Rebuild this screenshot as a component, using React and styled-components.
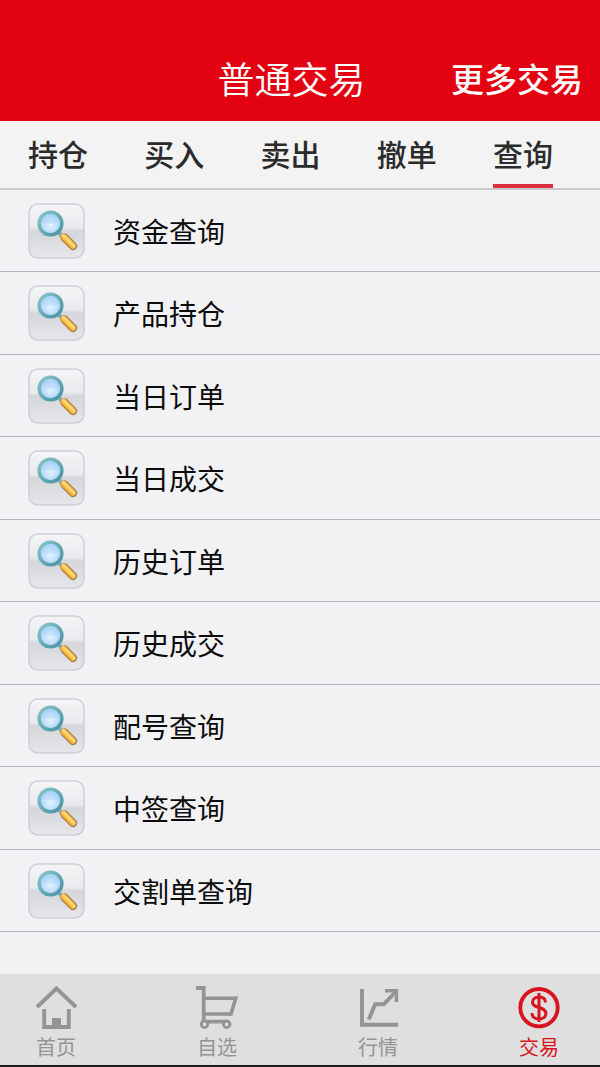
import { useState } from "react";
import styled, { createGlobalStyle } from "styled-components";

const GlobalStyle = createGlobalStyle`
  * {
    box-sizing: border-box;
  }

  body {
    margin: 0;
    background: #f2f2f5;
    font-family: "Noto Sans CJK SC", "Noto Sans", sans-serif;
  }

  button {
    margin: 0;
    padding: 0;
    border: 0;
    background: none;
    font: inherit;
    color: inherit;
    cursor: pointer;
  }
`;

const Page = styled.div`
  min-height: 100vh;
  display: flex;
  flex-direction: column;
`;

const Header = styled.header`
  display: grid;
  grid-template-columns: 1fr auto 1fr;
  align-items: center;
  height: 121px;
  padding: 34px 17px 0 0;
  background: #e30211;
  color: #fff;

  h1 {
    grid-column: 2;
    margin: 0;
    font-size: 37px;
    line-height: 40px;
    font-weight: 350;
  }
`;

const MoreButton = styled.button`
  && {
    justify-self: end;
    font-size: 33px;
    line-height: 40px;
    font-weight: 500;
  }
`;

const Tabs = styled.nav`
  display: flex;
  justify-content: space-between;
  height: 69px;
  padding: 0 47px 0 28px;
  background: #f3f3f4;
  border-bottom: 2px solid #c9c9cc;
`;

const Tab = styled.button`
  && {
    height: 67px;
    border-bottom: 4px solid ${({ $active }) => ($active ? "#dc2f3c" : "transparent")};
    font-size: 30px;
    line-height: 62px;
    font-weight: 500;
    color: #2b2b2b;
  }
`;

const MenuList = styled.ul`
  flex: 1;
  margin: 0;
  padding: 0;
  list-style: none;

  li {
    height: 82px;
    border-bottom: 1px solid #b3b3ba;
  }

  li:nth-child(even) {
    height: 83px;
  }
`;

const MenuItem = styled.button`
  && {
    display: flex;
    align-items: center;
    gap: 28px;
    width: 100%;
    height: 100%;
    padding: 0 28px;
    font-size: 28px;
    line-height: 40px;
    color: #0c0c0c;
    text-align: left;
  }
`;

const BottomBar = styled.nav`
  display: flex;
  justify-content: space-between;
  height: 93px;
  padding: 11px 40px 0 35px;
  background: #dfdfdf;
  border-bottom: 2px solid #1c1c1e;
`;

const BottomItem = styled.button`
  && {
    display: flex;
    flex-direction: column;
    align-items: center;
    gap: 8px;
    width: 42px;
    font-size: 20px;
    line-height: 20px;
    color: ${({ $active }) => ($active ? "#d81420" : "#949494")};
  }

  svg {
    display: block;
    fill: none;
    stroke: currentColor;
  }
`;

function SearchTile() {
  return (
    <svg width="57" height="56" viewBox="0 0 57 56" aria-hidden="true">
      <defs>
        <linearGradient id="tile" x1="0" y1="0" x2="0" y2="1">
          <stop offset="0" stopColor="#f5f5f7" />
          <stop offset="0.44" stopColor="#e9eaed" />
          <stop offset="0.5" stopColor="#d4d6db" />
          <stop offset="1" stopColor="#e6e7ea" />
        </linearGradient>
        <radialGradient id="lens" cx="0.5" cy="0.55" r="0.55">
          <stop offset="0" stopColor="#e6f4ff" />
          <stop offset="0.5" stopColor="#c3e1fc" />
          <stop offset="1" stopColor="#9ccbf3" />
        </radialGradient>
        <linearGradient id="ring" x1="0" y1="0" x2="1" y2="1">
          <stop offset="0" stopColor="#86c5c9" />
          <stop offset="1" stopColor="#4792a2" />
        </linearGradient>
        <linearGradient id="handle" gradientUnits="userSpaceOnUse" x1="37" y1="41.500" x2="43" y2="35.500">
          <stop offset="0" stopColor="#c9821c" />
          <stop offset="0.35" stopColor="#f6b93a" />
          <stop offset="0.65" stopColor="#fde080" />
          <stop offset="1" stopColor="#dc9526" />
        </linearGradient>
      </defs>
      <rect x="1" y="1" width="55" height="54" rx="9" fill="url(#tile)" stroke="#d0d0d4" strokeWidth="1.500" />
      <path d="M30 29l5 5" stroke="#94a5ae" strokeWidth="4" />
      <path d="M36.500 34.500l8.500 8.500" stroke="#a97a4a" strokeWidth="8.200" strokeLinecap="round" />
      <path d="M36 34l8.500 8.500" stroke="url(#handle)" strokeWidth="6.600" strokeLinecap="round" />
      <circle cx="22.500" cy="20.500" r="11.400" fill="url(#lens)" stroke="url(#ring)" strokeWidth="3.400" />
      <path d="M14 19a8.600 8.600 0 0 1 17 0q-8.500 3-17 0z" fill="#a4cdf6" opacity="0.35" />
    </svg>
  );
}

function HomeIcon() {
  return (
    <svg width="42" height="44" viewBox="0 0 42 44" aria-hidden="true">
      <path d="M2 22L21.500 3.500 41 22M9.200 24v18h24.600V24" strokeWidth="3.900" />
      <path d="M17 33h9v9h-9z" fill="currentColor" stroke="none" />
    </svg>
  );
}

function CartIcon() {
  return (
    <svg width="42" height="44" viewBox="0 0 42 44" aria-hidden="true">
      <path d="M0 3h7.700v33.500" strokeWidth="3.800" />
      <path d="M7.700 13.300h32L35 29H7.700M8 36.600h23" strokeWidth="3.600" />
      <circle cx="8.500" cy="39.300" r="3.300" fill="#dfdfdf" strokeWidth="2.800" />
      <circle cx="30.700" cy="39.300" r="3.300" fill="#dfdfdf" strokeWidth="2.800" />
    </svg>
  );
}

function ChartIcon() {
  return (
    <svg width="42" height="44" viewBox="0 0 42 44" aria-hidden="true">
      <path d="M5 4v35.700h36" strokeWidth="3.900" />
      <path d="M11.700 34.500l6.500-15.300h8.600L38.500 7" strokeWidth="3.900" />
      <path d="M28 5.800h11.400V17" strokeWidth="3.600" />
    </svg>
  );
}

function DollarIcon() {
  return (
    <svg width="42" height="44" viewBox="0 0 42 44" aria-hidden="true">
      <circle cx="21" cy="22.700" r="18.700" strokeWidth="3.900" />
      <path
        d="M27.500 17.500c0-3.600-2.700-5.500-6.500-5.500s-6.500 2-6.500 5.200c0 7 13.400 3.600 13.400 11.300 0 3.500-3 5.500-6.900 5.500s-7-2-7-6M21 8v29"
        strokeWidth="3"
      />
    </svg>
  );
}

const tabs = ["持仓", "买入", "卖出", "撤单", "查询"];

const queries = [
  "资金查询",
  "产品持仓",
  "当日订单",
  "当日成交",
  "历史订单",
  "历史成交",
  "配号查询",
  "中签查询",
  "交割单查询",
];

const sections = [
  { label: "首页", Icon: HomeIcon },
  { label: "自选", Icon: CartIcon },
  { label: "行情", Icon: ChartIcon },
  { label: "交易", Icon: DollarIcon },
];

export default function App() {
  const [tab, setTab] = useState("查询");
  const [section, setSection] = useState("交易");

  return (
    <Page>
      <GlobalStyle />
      <Header>
        <h1>普通交易</h1>
        <MoreButton type="button">更多交易</MoreButton>
      </Header>
      <Tabs>
        {tabs.map((name) => (
          <Tab key={name} type="button" $active={name === tab} onClick={() => setTab(name)}>
            {name}
          </Tab>
        ))}
      </Tabs>
      <MenuList>
        {queries.map((name) => (
          <li key={name}>
            <MenuItem type="button">
              <SearchTile />
              {name}
            </MenuItem>
          </li>
        ))}
      </MenuList>
      <BottomBar>
        {sections.map(({ label, Icon }) => (
          <BottomItem
            key={label}
            type="button"
            $active={label === section}
            onClick={() => setSection(label)}
          >
            <Icon />
            <span>{label}</span>
          </BottomItem>
        ))}
      </BottomBar>
    </Page>
  );
}
